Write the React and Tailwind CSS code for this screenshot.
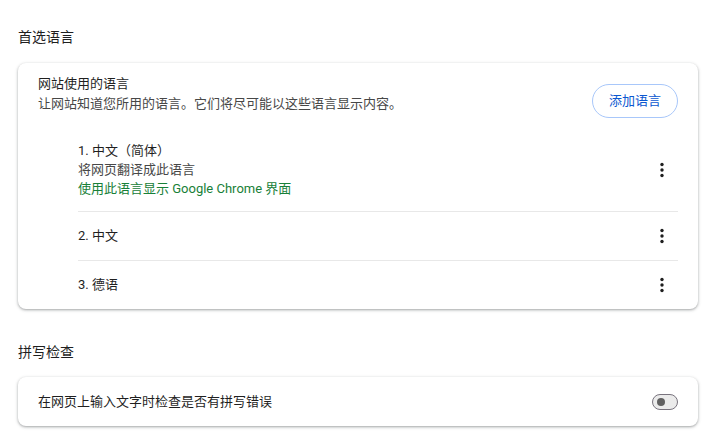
import React from "react";

const font = { fontFamily: 'Roboto, "Noto Sans CJK SC", sans-serif' };

function Kebab() {
  return (
    <svg width="20" height="20" viewBox="0 0 20 20" className="shrink-0">
      <circle cx="10" cy="4.5" r="1.7" fill="#1f1f1f" />
      <circle cx="10" cy="10" r="1.7" fill="#1f1f1f" />
      <circle cx="10" cy="15.5" r="1.7" fill="#1f1f1f" />
    </svg>
  );
}

const cardCls =
  "w-[680px] rounded-lg bg-white shadow-[0_1px_2px_0_rgba(60,64,67,0.3),0_1px_3px_1px_rgba(60,64,67,0.15)]";

export default function App() {
  return (
    <div
      className="min-h-[434px] w-[709px] bg-white pl-[18px] pt-[27px] text-[13px] text-[#1f1f1f]"
      style={font}
    >
      <div className="text-[14px] leading-[20px] text-[#1f1f1f]">首选语言</div>
      <div className={`${cardCls} mt-[16px]`}>
        <div className="flex items-start justify-between px-[20px] pt-[11px]">
          <div className="leading-[20px]">
            <div className="text-[#1f1f1f]">网站使用的语言</div>
            <div className="text-[#474747]">
              让网站知道您所用的语言。它们将尽可能以这些语言显示内容。
            </div>
          </div>
          <button className="mt-[10px] flex h-[34px] w-[86px] items-center justify-center rounded-full border border-[#a8c7fa] text-[13px] text-[#0b57d0]">
            添加语言
          </button>
        </div>
        <div className="ml-[60px] mr-[20px]">
          <div className="flex items-center justify-between border-b border-[#e8e8e8] pb-[13px] pt-[23px]">
            <div className="leading-[19px]">
              <div className="text-[#1f1f1f]">1. 中文（简体）</div>
              <div className="text-[#474747]">将网页翻译成此语言</div>
              <div className="text-[#188038]">使用此语言显示 Google Chrome 界面</div>
            </div>
            <div className="mr-[6px]"><Kebab /></div>
          </div>
          <div className="flex items-center justify-between border-b border-[#e8e8e8] pb-[14px] pt-[14px] leading-[20px]">
            <div>2. 中文</div>
            <div className="mr-[6px]"><Kebab /></div>
          </div>
          <div className="flex items-center justify-between pb-[14px] pt-[14px] leading-[20px]">
            <div>3. 德语</div>
            <div className="mr-[6px]"><Kebab /></div>
          </div>
        </div>
      </div>

      <div className="mt-[33px] text-[14px] leading-[20px]">拼写检查</div>
      <div className={`${cardCls} mt-[15px] flex h-[49px] items-center justify-between px-[20px]`}>
        <div className="leading-[20px] text-[#1f1f1f]">在网页上输入文字时检查是否有拼写错误</div>
        <div className="relative h-[16px] w-[26px] rounded-full border border-[#79747e] bg-[#ebebeb]">
          <div className="absolute left-[4px] top-[3px] h-[8px] w-[8px] rounded-full bg-[#616161]" />
        </div>
      </div>
    </div>
  );
}
